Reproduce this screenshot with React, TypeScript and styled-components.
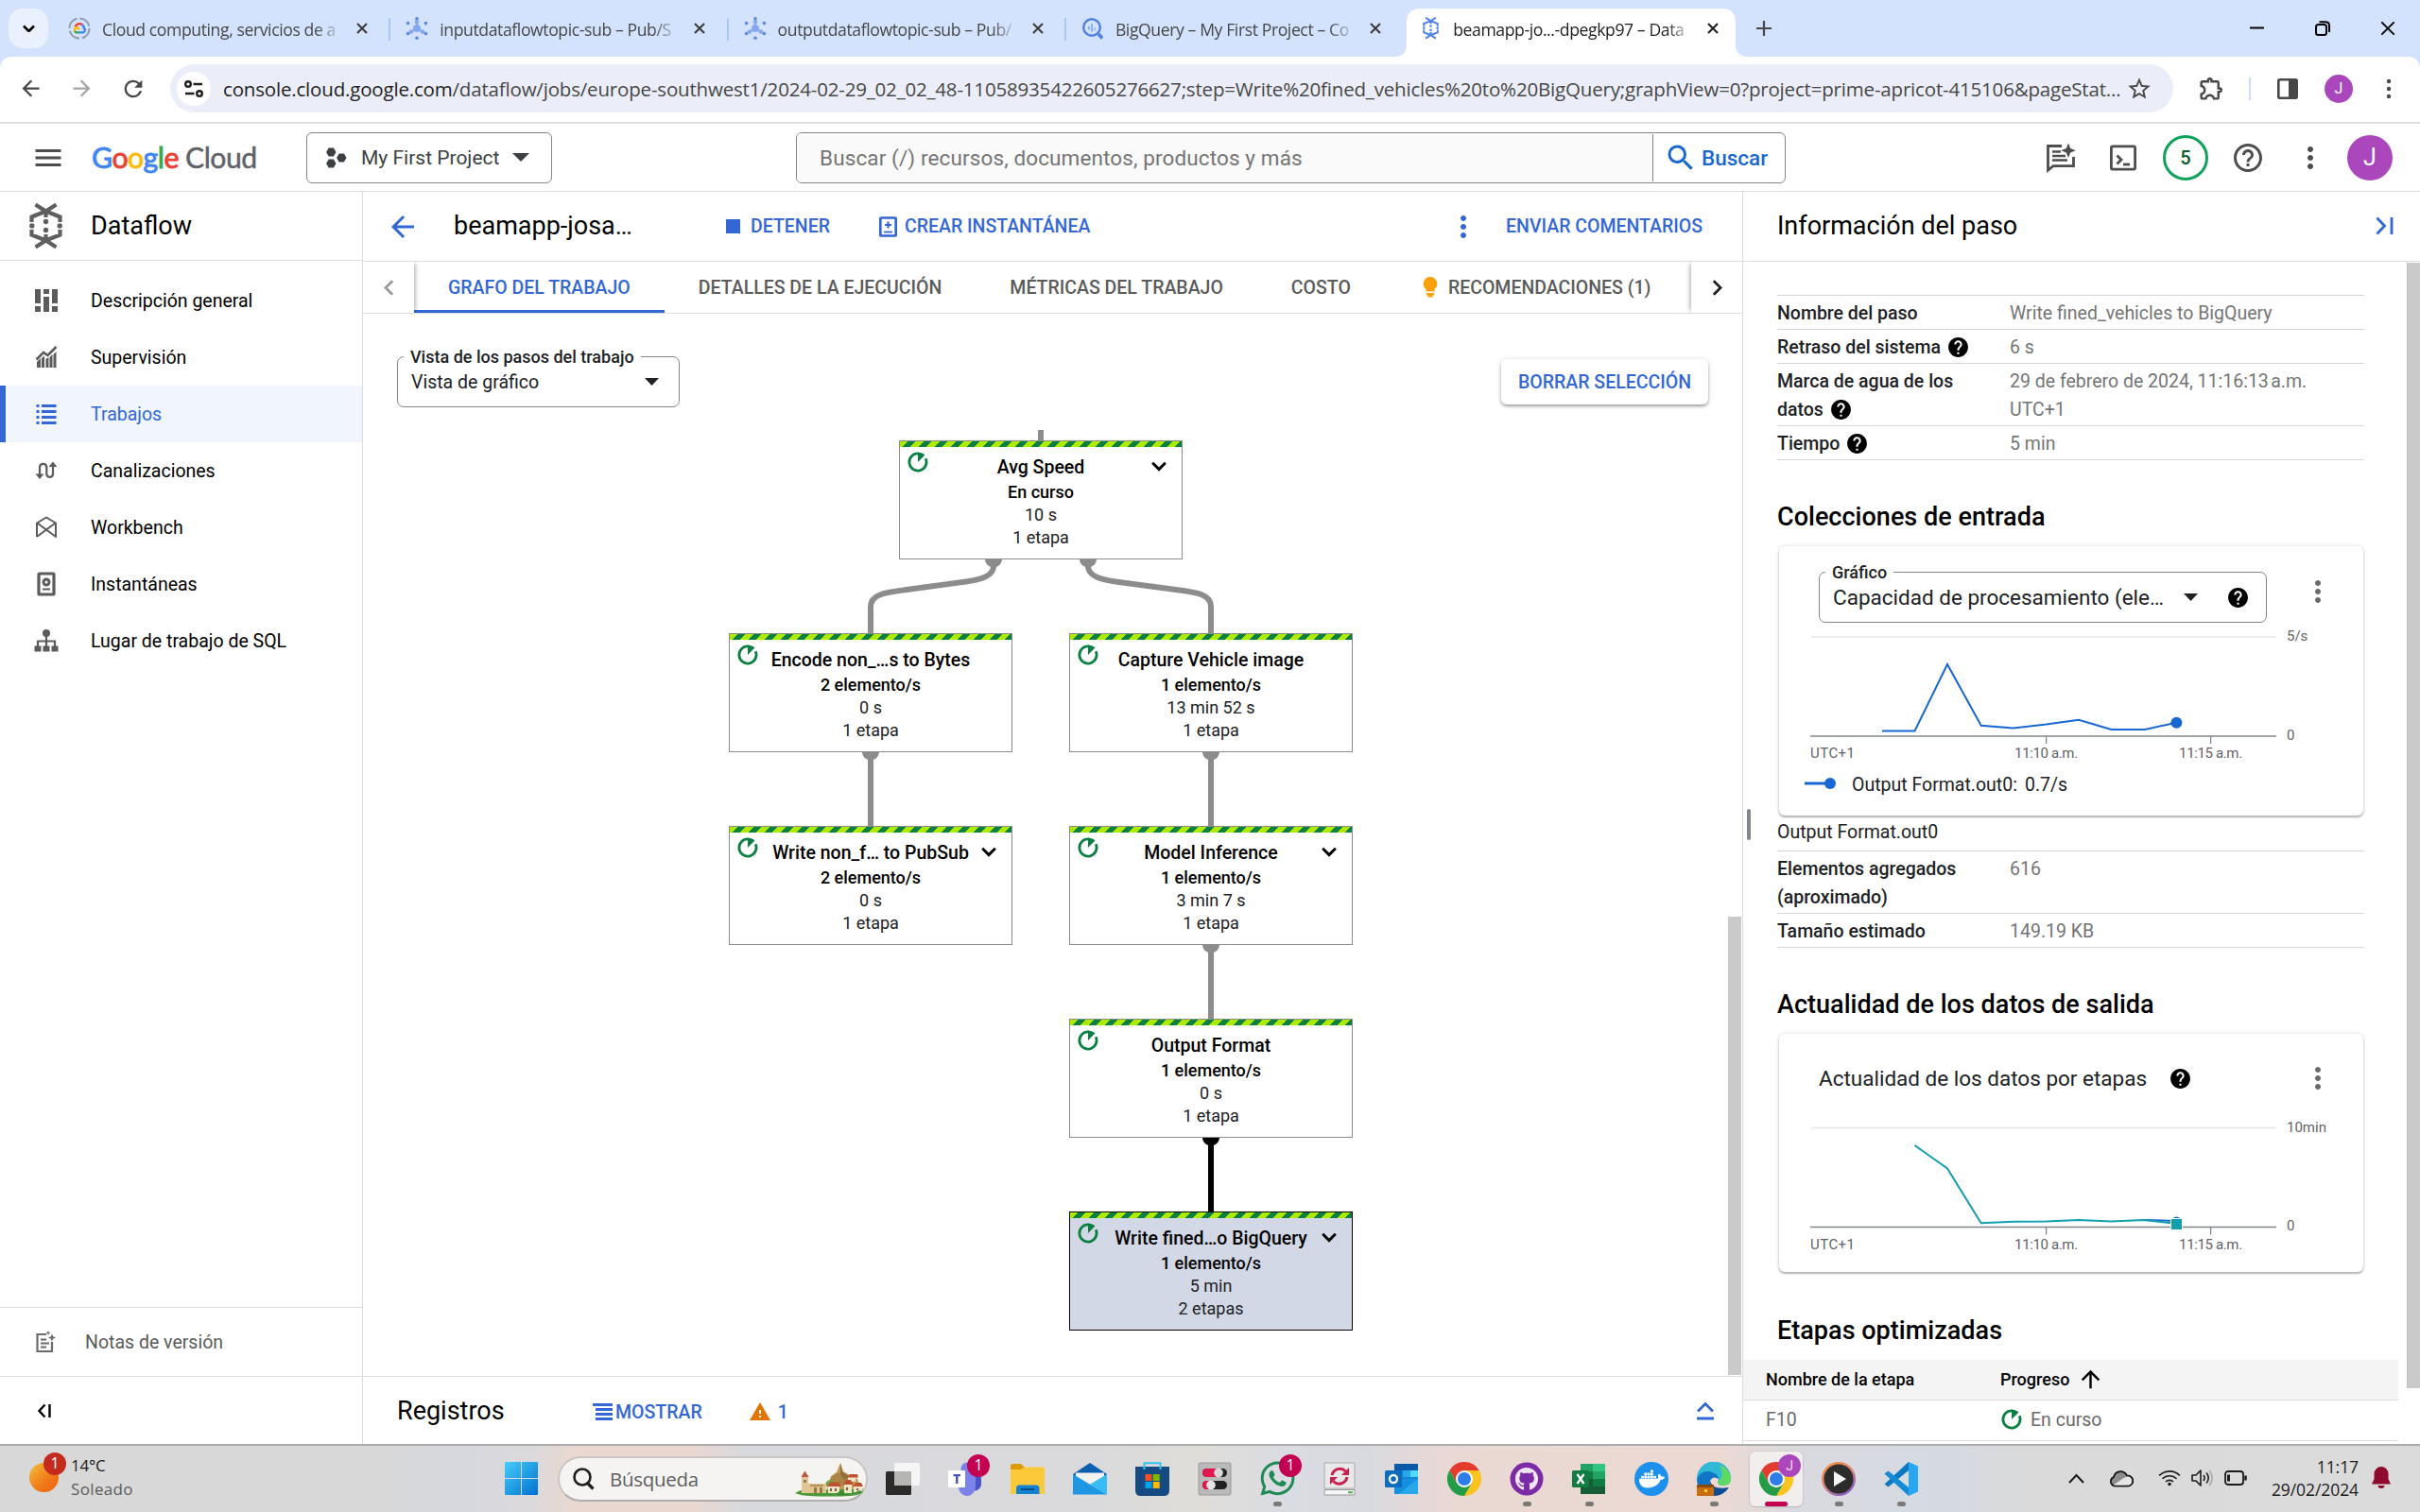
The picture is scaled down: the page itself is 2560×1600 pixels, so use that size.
import React from "react";
import styled, { createGlobalStyle, css } from "styled-components";
import {
  MdArrowBack,
  MdArrowForward,
  MdArrowUpward,
  MdChevronLeft,
  MdChevronRight,
  MdHelp,
  MdHelpOutline,
  MdMenu,
  MdMoreVert,
  MdOutlineExtension,
  MdRefresh,
  MdSearch,
  MdStarOutline,
  MdWarning,
} from "react-icons/md";
import { FaDocker, FaGithub, FaWhatsapp } from "react-icons/fa";

const ui = `Roboto, "Liberation Sans", sans-serif`;
const sys = `"Open Sans", "Noto Sans", sans-serif`;
const blue = "#3367d6";
const rule = "#dcdcdc";

const Global = createGlobalStyle`
  *, *::before, *::after { box-sizing: border-box; }
  body { margin: 0; background: #fff; font-family: ${ui}; color: #000; }
  svg { display: block; flex: none; }
`;

const Screen = styled.div`
  width: 2560px;
  height: 1600px;
  display: flex;
  flex-direction: column;
  overflow: hidden;
  background: #fff;
`;

/* ---------- browser chrome ---------- */

const TabStrip = styled.div`
  height: 60px;
  flex: none;
  display: flex;
  align-items: center;
  background: #d3e2fd;
  font-family: ${sys};
`;

const TabSearch = styled.div`
  width: 42px;
  height: 42px;
  margin: 0 4px 0 9px;
  border-radius: 15px;
  background: #e9f1fe;
  display: grid;
  place-items: center;
`;

const BrowserTab = styled.div<{ $active?: boolean; $line?: boolean }>`
  width: 357.3px;
  height: 60px;
  padding: 0 20px 0 17px;
  display: flex;
  align-items: center;
  position: relative;
  flex: none;
  ${(p) =>
    p.$line &&
    css`
      &::after {
        content: "";
        position: absolute;
        right: -1px;
        top: 19px;
        width: 2px;
        height: 24px;
        background: #a8c7fa;
      }
    `}
`;

const ActiveTabShape = styled.svg`
  position: absolute;
  left: -8px;
  top: 9px;
`;

const TabLabel = styled.span<{ $active?: boolean }>`
  position: relative;
  width: 258px;
  margin-left: 12px;
  white-space: nowrap;
  font-size: 17.6px;
  line-height: 26px;
  letter-spacing: -0.4px;
  padding-top: 2px;
  color: ${(p) => (p.$active ? "#1f1f1f" : "#474747")};
  mask-image: linear-gradient(90deg, #000 226px, transparent 254px);
`;

const TabIcon = styled.span`
  position: relative;
  width: 24px;
  display: flex;
`;

const TabClose = styled.span`
  position: relative;
  width: 13px;
  margin-left: 11px;
  display: flex;
`;

const NewTab = styled.div`
  width: 50px;
  display: grid;
  place-items: center;
`;

const WindowButtons = styled.div`
  margin-left: auto;
  display: flex;
  > span {
    width: 69px;
    display: grid;
    place-items: center;
  }
`;

const ToolbarBack = styled.div`
  background: #d3e2fd;
  flex: none;
`;

const Toolbar = styled.div`
  height: 71px;
  display: flex;
  align-items: center;
  padding: 0 0 2px 19px;
  border-radius: 12px 12px 0 0;
  background: #fff;
  border-bottom: 2px solid #dfdfdf;
  color: #474747;
`;

const ToolButton = styled.span<{ $w: number; $dim?: boolean }>`
  width: ${(p) => p.$w}px;
  flex: none;
  display: flex;
  color: ${(p) => (p.$dim ? "#a5a5a5" : "#474747")};
`;

const Omnibox = styled.div`
  width: 2119px;
  flex: none;
  height: 51px;
  border-radius: 26px;
  background: #ebeef8;
  display: flex;
  align-items: center;
  padding: 0 22px 0 7px;
  font-family: ${sys};
`;

const SiteInfo = styled.span`
  width: 36px;
  height: 36px;
  border-radius: 50%;
  background: #fff;
  display: grid;
  place-items: center;
  margin-right: 13px;
`;

const Url = styled.span`
  flex: 1;
  white-space: nowrap;
  font-size: 20.5px;
  letter-spacing: -0.18px;
  color: #474747;
  b {
    font-weight: 400;
    color: #1f1f1f;
  }
`;

const Disc = styled.span<{ $size: number; $font: number }>`
  width: ${(p) => p.$size}px;
  height: ${(p) => p.$size}px;
  font-size: ${(p) => p.$font}px;
  border-radius: 50%;
  background: #ab47bc;
  color: #fff;
  display: grid;
  place-items: center;
  flex: none;
  font-family: ${ui};
`;

const ToolDivider = styled.span`
  width: 2px;
  flex: none;
  height: 24px;
  background: #c8dcfc;
`;

/* ---------- console header ---------- */

const Header = styled.header`
  height: 72px;
  flex: none;
  display: flex;
  align-items: center;
  border-bottom: 1px solid ${rule};
  padding-left: 33px;
  color: #4d4d4d;
`;

const Logo = styled.div`
  width: 227px;
  margin-left: 28px;
  padding-bottom: 2px;
  font: 400 30.2px/40px Lato, sans-serif;
  letter-spacing: -0.5px;
  -webkit-text-stroke: 0.5px currentColor;
  white-space: nowrap;
  color: #5f6368;
`;

const Ink = styled.span<{ $c: string }>`
  color: ${(p) => p.$c};
  -webkit-text-stroke: 0.9px ${(p) => p.$c};
`;

const ProjectPicker = styled.div`
  width: 260px;
  height: 54px;
  border: 1.5px solid #80868b;
  border-radius: 6px;
  display: flex;
  align-items: center;
  padding-left: 20px;
  font-size: 21px;
  color: #3c4043;
  > span {
    width: 160px;
    margin-left: 15px;
  }
`;

const SearchBox = styled.div`
  width: 1047px;
  height: 54px;
  margin-left: 258px;
  border: 1.5px solid #80868b;
  border-radius: 6px;
  display: flex;
  align-items: center;
  overflow: hidden;
  font-size: 22.5px;
`;

const SearchInput = styled.span`
  flex: 1;
  height: 100%;
  padding-left: 24px;
  display: flex;
  align-items: center;
  background: #fafafa;
  color: #757575;
  letter-spacing: 0.12px;
`;

const SearchButton = styled.span`
  width: 140px;
  height: 50px;
  border-left: 1px solid #80868b;
  display: flex;
  align-items: center;
  padding-left: 11px;
  gap: 4px;
  color: #1967d2;
  font-weight: 500;
`;

const HeaderTools = styled.div`
  margin-left: 258px;
  display: flex;
  align-items: center;
  > * {
    width: 66px;
    display: grid;
    place-items: center;
  }
  > :last-child {
    width: 60px;
  }
`;

const Badge5 = styled.span`
  width: 48px;
  height: 48px;
  border: 3px solid #12a15b;
  border-radius: 50%;
  display: grid;
  place-items: center;
  font-size: 20px;
  font-weight: 500;
  color: #0a5a32;
`;

/* ---------- body ---------- */

const Body = styled.div`
  flex: 1;
  min-height: 0;
  display: flex;
`;

const Sidebar = styled.nav`
  width: 384px;
  flex: none;
  border-right: 1px solid ${rule};
  display: flex;
  flex-direction: column;
`;

const Product = styled.div`
  height: 73px;
  border-bottom: 1px solid ${rule};
  display: flex;
  align-items: center;
  padding-left: 31px;
  gap: 30px;
  font-size: 27px;
`;

const NavList = styled.div`
  padding-top: 12px;
  flex: 1;
`;

const NavItem = styled.div<{ $active?: boolean }>`
  height: 60px;
  display: flex;
  align-items: center;
  gap: 34px;
  padding-left: ${(p) => (p.$active ? 30 : 36)}px;
  border-left: ${(p) => (p.$active ? `6px solid ${blue}` : "0")};
  background: ${(p) => (p.$active ? "#f0f5fe" : "none")};
  color: ${(p) => (p.$active ? blue : "#000")};
  font-size: 19.5px;
  svg {
    color: ${(p) => (p.$active ? blue : "#5b5b5b")};
  }
`;

const NotesItem = styled.div`
  height: 73px;
  border-top: 1px solid ${rule};
  display: flex;
  align-items: center;
  gap: 30px;
  padding-left: 36px;
  font-size: 19.5px;
  color: #5b5b5b;
`;

const Collapse = styled.div`
  height: 72px;
  border-top: 1px solid ${rule};
  display: flex;
  align-items: center;
  padding-left: 38px;
`;

const Main = styled.main`
  width: 1460px;
  flex: none;
  border-right: 1px solid ${rule};
  display: flex;
  flex-direction: column;
`;

const MainHeader = styled.div`
  height: 74px;
  border-bottom: 1px solid ${rule};
  display: flex;
  align-items: center;
  padding-left: 24px;
  color: ${blue};
`;

const JobTitle = styled.span`
  width: 287px;
  margin-left: 36px;
  padding-bottom: 2px;
  font-size: 27px;
  color: #000;
`;

const TextButton = styled.span<{ $gap?: number }>`
  display: flex;
  align-items: center;
  gap: ${(p) => p.$gap ?? 9}px;
  font-size: 19.5px;
  font-weight: 500;
  white-space: nowrap;
  color: ${blue};
`;

const StopSquare = styled.i`
  width: 15px;
  height: 15px;
  background: ${blue};
`;

const TabBar = styled.div`
  height: 55px;
  border-bottom: 1px solid ${rule};
  display: flex;
`;

const TabArrow = styled.span<{ $right?: boolean }>`
  width: 54px;
  display: grid;
  place-items: center;
  background: #fff;
  color: ${(p) => (p.$right ? "#202124" : "#9a9a9a")};
  box-shadow: ${(p) => (p.$right ? "-3px 0 5px -2px" : "3px 0 5px -2px")} rgba(0, 0, 0, 0.35);
  clip-path: ${(p) => (p.$right ? "inset(0 0 0 -8px)" : "inset(0 -8px 0 0)")};
`;

const PageTab = styled.span<{ $active?: boolean; $icon?: boolean }>`
  height: 54px;
  padding: 0 36px 0 ${(p) => (p.$icon ? 40 : 36)}px;
  display: flex;
  align-items: center;
  gap: 11px;
  font-size: 19.5px;
  font-weight: 500;
  white-space: nowrap;
  color: ${(p) => (p.$active ? blue : "#5b5b5b")};
  box-shadow: ${(p) => (p.$active ? `inset 0 -3px ${blue}` : "none")};
`;

const Canvas = styled.div`
  flex: 1;
  min-height: 0;
  position: relative;
  padding: 45px 36px 0;
`;

const FilterRow = styled.div`
  display: flex;
  justify-content: space-between;
`;

const Outlined = styled.div<{ $w: number; $font: number }>`
  position: relative;
  width: ${(p) => p.$w}px;
  height: 54px;
  border: 1.5px solid #80868b;
  border-radius: 7px;
  display: flex;
  align-items: center;
  padding-left: 14px;
  font-size: ${(p) => p.$font}px;
  color: #202124;
`;

const FloatLabel = styled.label`
  position: absolute;
  left: 6px;
  top: -11px;
  padding: 0 7px;
  background: #fff;
  font-size: 18px;
  line-height: 22px;
  font-weight: 500;
  color: #202124;
  white-space: nowrap;
`;

const OutlinedText = styled.span<{ $w: number }>`
  width: ${(p) => p.$w}px;
  flex: none;
  white-space: nowrap;
`;

const RaisedButton = styled.div`
  width: 219px;
  height: 48px;
  margin-top: 3px;
  border-radius: 6px;
  display: grid;
  place-items: center;
  font-size: 19.5px;
  font-weight: 500;
  color: ${blue};
  box-shadow: 0 2px 3px rgba(0, 0, 0, 0.3), 0 1px 6px rgba(0, 0, 0, 0.14);
`;

const EdgeLayer = styled.svg`
  position: absolute;
  left: 0;
  top: 0;
`;

const Node = styled.div<{ $x: number; $y: number; $selected?: boolean }>`
  position: absolute;
  left: ${(p) => p.$x}px;
  top: ${(p) => p.$y}px;
  width: 300px;
  height: 126px;
  border: 1px solid ${(p) => (p.$selected ? "#000" : "#8c8c8c")};
  background: ${(p) => (p.$selected ? "#d2d8e6" : "#fff")};
  display: flex;
  flex-direction: column;
  align-items: center;
  text-align: center;
  font-size: 18px;
  line-height: 24px;
  color: #202124;
  &::before {
    content: "";
    width: 100%;
    height: 6px;
    margin-bottom: 8px;
    background: repeating-linear-gradient(135deg, #aeea00 0 6px, #0b8043 6px 12px);
  }
`;

const NodeTitle = styled.span`
  margin-bottom: -1px;
  font-size: 19.5px;
  line-height: 28px;
  font-weight: 500;
  white-space: nowrap;
  color: #000;
`;

const NodeMetric = styled.span`
  font-weight: 500;
  line-height: 25px;
  color: #000;
`;

const NodeStatus = styled.span`
  position: absolute;
  left: 7px;
  top: 10px;
`;

const NodeChevron = styled.span`
  position: absolute;
  right: 16px;
  top: 21px;
`;

const GraphScrollbar = styled.i`
  position: absolute;
  right: 1px;
  top: 638px;
  width: 14px;
  height: 485px;
  background: #cacaca;
`;

const LogsBar = styled.div`
  height: 72px;
  border-top: 1px solid ${rule};
  display: flex;
  align-items: center;
  padding: 0 30px 0 36px;
  ${TextButton} {
    padding-top: 3px;
  }
`;

const LogsTitle = styled.span`
  width: 207px;
  font-size: 27px;
`;

const Spacer = styled.span`
  flex: 1;
`;

/* ---------- step info panel ---------- */

const Panel = styled.aside`
  flex: 1;
  display: flex;
  flex-direction: column;
  min-width: 0;
  position: relative;
`;

const ResizeHandle = styled.i`
  position: absolute;
  left: 4px;
  top: 653px;
  width: 4px;
  height: 33px;
  border-radius: 2px;
  background: #80868b;
`;

const PanelHeader = styled.div`
  height: 74px;
  flex: none;
  border-bottom: 1px solid ${rule};
  display: flex;
  align-items: center;
  justify-content: space-between;
  padding: 0 28px 1px 36px;
  font-size: 27px;
`;

const PanelBody = styled.div`
  flex: 1;
  min-height: 0;
  display: flex;
  justify-content: space-between;
  overflow: hidden;
`;

const PanelScrollbar = styled.i`
  width: 14px;
  height: 1191px;
  margin-top: 1px;
  background: #cacaca;
  border-left: 1px solid #bdbdbd;
`;

const PanelContent = styled.div`
  padding: 35px 0 0 36px;
  width: 657px;
`;

const InfoTable = styled.dl`
  margin: 0;
  border-top: 1px solid #d6d6d6;
`;

const InfoRow = styled.div`
  display: grid;
  grid-template-columns: 246px 1fr;
  padding: 4px 0 1px;
  border-bottom: 1px solid #d6d6d6;
  font-size: 19.5px;
  line-height: 30px;
  dt {
    font-weight: 500;
    color: #202124;
    white-space: pre-line;
  }
  dt svg {
    display: inline-block;
    vertical-align: -6px;
    margin: -3px 0 0 6px;
    color: #000;
  }
  dd {
    margin: 0;
    color: #757575;
    white-space: pre-line;
  }
`;

const Heading = styled.h2<{ $top?: number }>`
  margin: ${(p) => p.$top ?? 42}px 0 13px;
  font-size: 27px;
  line-height: 36px;
  font-weight: 500;
  letter-spacing: 0.02px;
`;

const Card = styled.section<{ $h: number }>`
  height: ${(p) => p.$h}px;
  margin: 0 1px 0 2px;
  border-radius: 6px;
  display: flex;
  flex-direction: column;
  box-shadow: 0 2px 2px rgba(0, 0, 0, 0.26), 0 0 4px rgba(0, 0, 0, 0.16);
`;

const CardTop = styled.div<{ $pad: number; $h: number }>`
  height: ${(p) => p.$h}px;
  flex: none;
  padding: ${(p) => p.$pad}px 30px 0 42px;
  display: flex;
  align-items: center;
  justify-content: space-between;
  color: #6b6b6b;
`;

const CardMenu = styled.span<{ $raise?: boolean }>`
  padding-bottom: ${(p) => (p.$raise ? 12 : 0)}px;
`;

const CardTitle = styled.span`
  display: flex;
  align-items: center;
  gap: 23px;
  font-size: 22.5px;
  color: #202124;
  svg {
    color: #000;
  }
`;

const Legend = styled.div`
  height: 36px;
  display: flex;
  align-items: center;
  padding-left: 26px;
  font-size: 19.5px;
  color: #202124;
  gap: 8px;
  svg {
    margin-right: 8px;
  }
`;

const Caption = styled.div`
  height: 37px;
  line-height: 35px;
  font-size: 19.5px;
  color: #202124;
`;

const StageGrid = styled.div<{ $head?: boolean }>`
  width: 693px;
  height: 43px;
  margin-left: -36px;
  padding: 0 0 2px 24px;
  display: grid;
  grid-template-columns: 248px 1fr;
  align-items: center;
  border-bottom: 1px solid ${rule};
  background: ${(p) => (p.$head ? "#f4f4f4" : "#fff")};
  font-size: ${(p) => (p.$head ? 18 : 19.5)}px;
  font-weight: ${(p) => (p.$head ? 500 : 400)};
  color: ${(p) => (p.$head ? "#000" : "#6b6b6b")};
  span {
    display: flex;
    align-items: center;
    gap: 8px;
  }
`;

/* ---------- taskbar ---------- */

const Taskbar = styled.footer`
  height: 72px;
  flex: none;
  border-top: 2px solid #ababab;
  padding-bottom: 1px;
  display: flex;
  align-items: center;
  font-family: ${sys};
  background: linear-gradient(
    90deg,
    #d8d8d8 0,
    #d8d8d8 400px,
    #d6d8df 480px,
    #dbd9dc 560px,
    #ead8d0 610px,
    #ead8d0 730px,
    #d8d9de 790px,
    #dadadc 1160px,
    #e0ddd8 1270px,
    #dadce3 1360px,
    #d9dae0 1450px,
    #ead8d4 1530px,
    #ecd9d3 1820px,
    #d9dadf 1900px,
    #d5dae2 2060px,
    #dadada 2150px,
    #dbdbdb 2560px
  );
`;

const Weather = styled.div`
  width: 534px;
  display: flex;
  align-items: center;
  padding: 0 0 2px 31px;
  font-size: 17px;
  line-height: 24.5px;
  letter-spacing: -0.2px;
  color: #1b1b1b;
  em {
    font-style: normal;
    letter-spacing: 0.35px;
    color: #5c5c5c;
  }
`;

const SunIcon = styled.span`
  position: relative;
  width: 31px;
  height: 31px;
  margin-right: 13px;
  border-radius: 50%;
  background: linear-gradient(135deg, #f2c038, #f07818 60%, #f0600f);
`;

const Count = styled.b<{ $x: number; $y: number; $c?: string }>`
  position: absolute;
  left: ${(p) => p.$x}px;
  top: ${(p) => p.$y}px;
  width: 24px;
  height: 24px;
  border-radius: 50%;
  background: ${(p) => p.$c ?? "#c30052"};
  color: #fff;
  font-size: 16px;
  line-height: 23px;
  font-weight: 400;
  text-align: center;
`;

const SearchPill = styled.div`
  width: 328px;
  height: 48px;
  margin: 0 4px 0 21px;
  border-radius: 24px;
  border: 2px solid #cbc5c4;
  border-bottom-color: #b1adad;
  background: #f6f4f3;
  display: flex;
  align-items: center;
  padding: 0 1px 0 13px;
  font-size: 20.5px;
  color: #5e5e5e;
  > span {
    flex: 1;
    margin-left: 16px;
    letter-spacing: -0.3px;
  }
`;

const Apps = styled.div`
  display: flex;
  width: 1122px;
`;

const AppCell = styled.div<{ $active?: boolean; $run?: boolean }>`
  position: relative;
  width: 56px;
  height: 58px;
  margin: 0 5px;
  border-radius: 6px;
  display: grid;
  place-items: center;
  background: ${(p) => (p.$active ? "#f3eeee" : "none")};
  box-shadow: ${(p) => (p.$active ? "0 0 0 1px rgba(0,0,0,.05), 0 1px 2px rgba(0,0,0,.12)" : "none")};
  &::after {
    content: "";
    display: ${(p) => (p.$active || p.$run ? "block" : "none")};
    position: absolute;
    bottom: 0;
    left: 50%;
    width: ${(p) => (p.$active ? 24 : 9)}px;
    height: 5px;
    margin-left: ${(p) => (p.$active ? -12 : -4)}px;
    border-radius: 3px;
    background: ${(p) => (p.$active ? "#c30052" : "#7b7878")};
  }
`;

const Profile = styled.i`
  position: absolute;
  left: 30px;
  top: 3px;
  width: 24px;
  height: 24px;
  border-radius: 50%;
  background: #ab47bc;
  color: #f0dcf4;
  font: 400 14px/24px ${ui};
  text-align: center;
`;

const Tray = styled.div`
  margin-left: 144px;
  padding-bottom: 1px;
  display: flex;
  align-items: center;
  color: #1b1b1b;
`;

const Slot = styled.span<{ $w: number }>`
  width: ${(p) => p.$w}px;
  flex: none;
  display: grid;
  place-items: center;
`;

const Clock = styled.div`
  width: 109px;
  font-size: 17.5px;
  line-height: 24px;
  letter-spacing: -0.08px;
  text-align: right;
  white-space: nowrap;
`;

/* ---------- icons ---------- */

const DataflowGlyph = ({ w, color }: { w: number; color: string }) => (
  <svg width={w} height={(w * 48) / 35} viewBox="0 0 35 48" fill="none" stroke={color} strokeWidth="4.2">
    <path d="M6.500 1.500 L17.500 8.500 L32.500 14.500 V20 M28.500 1.500 L17.500 8.500 L2.500 14.500 V20 M17.500 8 V15" />
    <path d="M6.500 46.500 L17.500 39.500 L32.500 33.500 V28 M28.500 46.500 L17.500 39.500 L2.500 33.500 V28 M17.500 40 V33" />
    <g fill={color} stroke="none">
      <circle cx="2.8" cy="24" r="2.700" />
      <circle cx="32.200" cy="24" r="2.700" />
      <circle cx="17.500" cy="19.500" r="2.700" />
      <circle cx="17.500" cy="28.500" r="2.700" />
    </g>
  </svg>
);

const PubSubGlyph = () => (
  <svg width="24" height="24" viewBox="0 0 24 24" fill="#5c85de">
    <g stroke="#7ba0ec" strokeWidth="1.800">
      <path d="M12 12 V5 M12 12 L5 16 M12 12 L19 16" />
    </g>
    <circle cx="12" cy="12" r="4" fill="#86a8f2" />
    <circle cx="6" cy="15.600" r="2.300" fill="#86a8f2" />
    <circle cx="18" cy="15.600" r="2.300" fill="#86a8f2" />
    <circle cx="12" cy="5.200" r="2.300" fill="#86a8f2" />
    <circle cx="12" cy="1.800" r="1.800" />
    <circle cx="12" cy="22.200" r="1.800" />
    <circle cx="2.600" cy="6.600" r="1.800" />
    <circle cx="21.400" cy="6.600" r="1.800" />
    <circle cx="2.600" cy="17.600" r="1.800" />
    <circle cx="21.400" cy="17.600" r="1.800" />
  </svg>
);

const CloudGlyph = () => (
  <svg width="24" height="24" viewBox="0 0 24 24" fill="none">
    <circle cx="12" cy="12" r="10.600" stroke="#8e99a8" strokeWidth="2" strokeDasharray="13.600 3.050" />
    <path d="M7.500 10.500 A5 5 0 0 1 15 8" stroke="#ea4335" strokeWidth="2.400" />
    <path d="M15 8 A6 6 0 0 1 17 13" stroke="#4285f4" strokeWidth="2.400" />
    <path d="M17.200 12 A2.600 2.600 0 0 1 15 16.400 H12" stroke="#4285f4" strokeWidth="2.400" />
    <path d="M12 16.400 H9 A2.800 2.800 0 0 1 7 14.800" stroke="#34a853" strokeWidth="2.400" />
    <path d="M7 15 A3 3 0 0 1 9.500 11 L12 13" stroke="#fbbc04" strokeWidth="2.400" />
  </svg>
);

const BigQueryGlyph = () => (
  <svg width="24" height="24" viewBox="0 0 24 24" fill="none" stroke="#5081e4">
    <circle cx="11" cy="11" r="8.800" strokeWidth="2.400" />
    <path d="M18 18 L22 22.500" strokeWidth="3.400" />
    <path d="M7.800 10 V13.500 M11 7 V15.500 M14.200 11.500 V13.500" strokeWidth="1.800" stroke="#86a8f2" />
  </svg>
);

const Cross = ({ size = 11, w = 2.1, color = "#3c3c3c" }) => (
  <svg width={size} height={size} viewBox="0 0 12 12" stroke={color} strokeWidth={w}>
    <path d="M1 1 L11 11 M11 1 L1 11" />
  </svg>
);

const Caret = ({ w = 15, h = 8 }: { w?: number; h?: number }) => (
  <svg width={w} height={h} viewBox="0 0 16 8" preserveAspectRatio="none" fill="currentColor">
    <path d="M0 0 H16 L8 8 Z" />
  </svg>
);

const StatusGlyph = () => (
  <svg width="24" height="24" viewBox="0 0 24 24" fill="none">
    <path d="M12.600 2.900 A9.100 9.100 0 1 0 20.300 8.300" stroke="#0b8043" strokeWidth="2.800" />
    <path d="M12 1.500 A10.500 10.500 0 0 1 17.600 3.100 L19.400 4.400 L12 12 Z" fill="#0b8043" />
  </svg>
);

const ChevronDown = ({ w = 16, sw = 2.9 }) => (
  <svg width={w} height={(w * 11) / 16} viewBox="0 0 16 11" fill="none" stroke="#000" strokeWidth={sw}>
    <path d="M1.200 1.800 L8 8.600 L14.800 1.800" />
  </svg>
);

const NavIcon: React.FC<{ name: string }> = ({ name }) => (
  <svg width="26" height="26" viewBox="0 0 26 26" fill="currentColor">
    {name === "overview" && (
      <path d="M1 1h6v15H1zM1 19h6v6H1zM10 1h6v5h-6zM10 9h6v16h-6zM19 1h6v15h-6zM19 19h6v6h-6z" />
    )}
    {name === "monitor" && (
      <>
        <path d="M3 18l4-4v10H3zM8 14l3-2.500V24H8zM12.500 14.500l3-1V24h-3zM16.500 13l3-3V24h-3zM20.500 10l3-3V24h-3z" />
        <path d="M2.500 15.500 L10 8 L14.500 11 L23.500 2" fill="none" stroke="currentColor" strokeWidth="2.600" />
      </>
    )}
    {name === "jobs" && (
      <path d="M2.500 3h3v3h-3zM8 3h15.500v3H8zM2.500 9h3v3h-3zM8 9h15.500v3H8zM2.500 15h3v3h-3zM8 15h15.500v3H8zM2.500 21h3v3h-3zM8 21h15.500v3H8z" />
    )}
    {name === "pipes" && (
      <>
        <path
          d="M6 19 V9 A3.700 3.700 0 0 1 13.300 9 V17 A3.400 3.400 0 0 0 20 17 V7"
          fill="none"
          stroke="currentColor"
          strokeWidth="2.200"
        />
        <path d="M1.500 16.500h9L6 22zM15.500 9h9L20 3.500z" />
      </>
    )}
    {name === "workbench" && (
      <path
        d="M3 23 V8.500 L13 2.500 L23 8.500 V23 L3.500 8.500 M3 23 L22.500 8.500"
        fill="none"
        stroke="currentColor"
        strokeWidth="2"
        strokeLinejoin="round"
      />
    )}
    {name === "snapshots" && (
      <>
        <rect x="5" y="2" width="16" height="22" rx="1" fill="none" stroke="currentColor" strokeWidth="3.200" />
        <circle cx="13" cy="11" r="3" fill="none" stroke="currentColor" strokeWidth="3" />
        <path d="M9 17.500h8v2H9z" />
      </>
    )}
    {name === "sql" && (
      <>
        <circle cx="13" cy="5" r="4" />
        <path d="M4 19 V13.500 H22 V19 M13 8 V19" fill="none" stroke="currentColor" strokeWidth="2.200" />
        <path d="M0.500 18.500h7v6h-7zM9.500 18.500h7v6h-7zM18.500 18.500h7v6h-7z" />
      </>
    )}
  </svg>
);

const NotesGlyph = () => (
  <svg width="24" height="24" viewBox="0 0 24 24" fill="none" stroke="#6b6b6b" strokeWidth="2.200">
    <path d="M13 4 H3.500 V22 H19 V12" />
    <path d="M7 9.500h6M7 13.500h9M7 17.500h6" strokeWidth="1.900" />
    <path
      d="M19 3.500l1.200 2.800 2.800 1.200-2.800 1.200L19 11.500l-1.200-2.800L15 7.500l2.800-1.200zM15 0l.7 1.800 1.800.7-1.800.7L15 5l-.7-1.800-1.800-.7 1.800-.7z"
      fill="#6b6b6b"
      stroke="none"
    />
  </svg>
);

const CommentSparkle = () => (
  <svg width="32" height="32" viewBox="0 0 32 32" fill="none" stroke="#4d4d4d" strokeWidth="2.800">
    <path d="M17 3.500 H2.500 V29 L8 24.600 H29.500 V15" />
    <path d="M7 9.500h9M7 14h14M7 18.500h16" strokeWidth="2.400" />
    <path
      d="M24 0.500l2.200 5.600 5.600 2.200-5.600 2.200L24 16.100l-2.200-5.600-5.600-2.200 5.600-2.200z"
      fill="#4d4d4d"
      stroke="none"
    />
  </svg>
);

const ShellGlyph = () => (
  <svg width="28" height="28" viewBox="0 0 28 28" fill="none" stroke="#4d4d4d" strokeWidth="2.800">
    <rect x="1.400" y="1.900" width="25.200" height="24.200" rx="1.500" />
    <path d="M7.500 11.500 L12 16 L7.500 20.500" />
    <path d="M14 21 H21" />
  </svg>
);

/* ---------- chart ---------- */

type Pt = [number, number];
const line = (pts: Pt[]) => pts.map((p) => p.join(",")).join(" ");

const Chart: React.FC<{
  h: number;
  top: number;
  max: string;
  children: React.ReactNode;
}> = ({ h, top, max, children }) => {
  const base = top + 105;
  return (
    <svg width="618" height={h} fontFamily={ui} fontSize="15" fill="#5f6368">
      <path d={`M34 ${top} H526`} stroke="#e6e6e6" strokeWidth="1.500" />
      <path d={`M33 ${base} H526 M282.600 ${base} v8 M456.600 ${base} v8`} stroke="#80868b" strokeWidth="1.300" fill="none" />
      <text x="537" y={top + 4}>{max}</text>
      <text x="537" y={base + 3.5}>0</text>
      <text x="33" y={base + 23} textLength="47">UTC+1</text>
      <text x="282.600" y={base + 23} textAnchor="middle" textLength="67">11:10 a.m.</text>
      <text x="456.600" y={base + 23} textAnchor="middle" textLength="67">11:15 a.m.</text>
      {children}
    </svg>
  );
};

/* x positions share one minute step of 34.6px */
const throughput: Pt[] = [
  [109, 114.5], [143.5, 114.5], [178, 44], [213.7, 108.7], [248, 111.5],
  [282.6, 107.5], [317, 102.7], [351.5, 113], [387, 113], [420.4, 105.7],
];
const freshness: Pt[] = [
  [143.5, 45], [178, 69.5], [213.7, 127.3], [248, 125.7], [282.6, 125.5],
  [317, 124], [351.5, 125.5], [386, 124], [420.4, 128],
];

/* ---------- taskbar art ---------- */

const Castle = () => (
  <svg width="76" height="38" viewBox="0 0 76 38">
    <path d="M2 34 Q8 30 14 31 L70 29 Q75 26 73 34 Q66 38 40 37.500 Q10 38 2 34Z" fill="#4e9a3a" />
    <path d="M36 30 L40 16 L46 12 L50 2 L53 11 L60 15 L68 19 L72 30Z" fill="#c49a55" />
    <path d="M40 18 Q48 8 58 16 L66 22 L56 26 L38 25Z" fill="#a98446" />
    <path d="M50 2 L52.500 12 L60 16 L54 20 L50 14Z" fill="#8f7038" />
    <path d="M33 27 Q36 16 44 22 L50 28Z" fill="#7ba344" />
    <path d="M9 17h7v17H9z" fill="#e2c697" />
    <path d="M8.500 17 L12.500 10.500 L16.500 17Z" fill="#c0563a" />
    <path d="M16 24h19v10H16z" fill="#dfc592" />
    <path d="M18 25h14v2H18z" fill="#b48e57" />
    <path d="M22 28h3v6h-3zM28 28h3v6h-3z" fill="#9a7647" />
    <path d="M37 27h12v7H37zM54 25h8v9h-8zM64 27h9v6h-9zM58 17h8v5h-8z" fill="#f0e4c9" />
    <path d="M36 27 L39 22.500 H48 L51 27ZM53 25 L56 20 H61 L64 25ZM63 27 L66 23 H72 L74 27ZM57 17.500 L60 14 H68 L69 17.500Z" fill="#bd5132" />
    <path d="M39 29h2v3h-2zM44 29h2v3h-2zM56 28h2v3h-2zM67 29h2v2h-2zM11.500 20h2v3h-2z" fill="#7d5a3c" />
    <path d="M46 36 Q50 27 56 36ZM66 34 Q69 29 74 33Z" fill="#3f8a35" />
  </svg>
);

const ChromeLogo = () => (
  <svg width="36" height="36" viewBox="0 0 36 36">
    <path d="M18 9 H33.600 A18 18 0 0 1 18 36 L25.800 22.500Z" fill="#fcc31e" />
    <path d="M18 9 H33.600 A18 18 0 0 0 2.400 9 L10.200 22.500Z" fill="#e33b2e" />
    <path d="M2.400 9 L10.200 22.500 L18 27 L25.800 22.500 L18 36 A18 18 0 0 1 2.400 9Z" fill="#249b47" />
    <circle cx="18" cy="18" r="9" fill="#fff" />
    <circle cx="18" cy="18" r="7" fill="#2f7de9" />
  </svg>
);

const appIcons: Record<string, React.ReactNode> = {
  taskview: (
    <svg width="38" height="36" viewBox="0 0 38 36">
      <rect x="1" y="10" width="27" height="25" rx="1.500" fill="#2b2b2a" />
      <rect x="10" y="1" width="27" height="24" rx="1.500" fill="#fff" fillOpacity=".72" />
      <rect x="10" y="10" width="18" height="15" fill="#b6b6b5" />
    </svg>
  ),
  teams: (
    <svg width="38" height="36" viewBox="0 0 38 36">
      <path d="M24 9h12v14a7 7 0 0 1-11 6z" fill="#4b55c4" />
      <circle cx="21" cy="7" r="6.500" fill="#7b83eb" />
      <path d="M12 11h18v14a9 10 0 0 1-18 2z" fill="#7b83eb" />
      <rect x="1" y="9" width="18" height="18" rx="1" fill="#fff" />
      <path d="M6.500 13h7.500v2.200h-2.500V23h-2.500v-7.800H6.500z" fill="#4b53bc" />
    </svg>
  ),
  folder: (
    <svg width="36" height="34" viewBox="0 0 36 34">
      <path d="M0 3 Q0 1 2 1 H11 L15 5 H34 V12 H0Z" fill="#dd9c05" />
      <path d="M0 7 H11 L15 4.500 H34 Q36 4.500 36 6 V33 H0Z" fill="#fcc93a" />
      <path d="M6 33 V27 Q6 23.500 9.500 23.500 H27 Q30.500 23.500 30.500 27 V33Z" fill="#1380d0" />
      <path d="M11 28 H25" stroke="#0a4c8c" strokeWidth="2" />
    </svg>
  ),
  mail: (
    <svg width="36" height="34" viewBox="0 0 36 34">
      <path d="M0 12 L18 0 L36 12 V16 H0Z" fill="#0b5fae" />
      <path d="M3 10.500H33V20L18 25L3 20Z" fill="#f2f2f2" />
      <path d="M0 12 L36 33.500 H0Z" fill="#1f96e2" />
      <path d="M36 12 L18 22.800 L36 33.500Z" fill="#37bdf3" />
    </svg>
  ),
  store: (
    <svg width="36" height="36" viewBox="0 0 36 36">
      <path d="M0 5 H36 V30 Q36 36 30 36 H6 Q0 36 0 30Z" fill="#164a82" />
      <path d="M9.500 8 V1.200 H26.500 V8" fill="none" stroke="#33c1f4" strokeWidth="2" />
      <path d="M10.500 13h7v7h-7z" fill="#f25022" />
      <path d="M18.700 13h7v7h-7z" fill="#7fba00" />
      <path d="M10.500 21h7v7h-7z" fill="#00a4ef" />
      <path d="M18.700 21h7v7h-7z" fill="#ffb900" />
    </svg>
  ),
  toggles: (
    <svg width="36" height="36" viewBox="0 0 36 36">
      <rect x="1" y="1" width="34" height="34" rx="1.500" fill="#b9b9b9" stroke="#999" />
      <rect x="5" y="7" width="26" height="9" rx="4.500" fill="#222" />
      <path d="M9.500 7 H22 V16 H9.500 A4.500 4.500 0 0 1 9.500 7Z" fill="#e3154f" />
      <circle cx="22" cy="11.500" r="4.800" fill="#d9d9d9" />
      <rect x="5" y="20" width="26" height="9" rx="4.500" fill="#222" />
      <path d="M9.500 20 H13 V29 H9.500 A4.500 4.500 0 0 1 9.500 20Z" fill="#e3154f" />
      <circle cx="14" cy="24.500" r="4.800" fill="#e6e6e6" />
    </svg>
  ),
  whatsapp: <FaWhatsapp size={41} color="#1f8a56" />,
  sync: (
    <svg width="36" height="36" viewBox="0 0 36 36" fill="none">
      <path d="M2 1 H34 V28 H2Z" fill="#e9e9e9" stroke="#aaa" />
      <path d="M2 29.500 H34 V35 H2Z" fill="#f6f6f6" stroke="#999" />
      <path d="M27 32.300 h5" stroke="#4ab04a" strokeWidth="2" />
      <path d="M10 14 A8.500 8.500 0 0 1 24.500 10 M26 16 A8.500 8.500 0 0 1 11.500 20.500" stroke="#c8204f" strokeWidth="3" />
      <path d="M28 6v8h-8zM8 24v-8h8z" fill="#c8204f" />
    </svg>
  ),
  outlook: (
    <svg width="36" height="34" viewBox="0 0 36 34">
      <path d="M10 1h25v22H10z" fill="#1583d6" />
      <path d="M10 1h25v7H10z" fill="#0a5aa8" />
      <path d="M19 8h8v7h-8z" fill="#28a8ea" />
      <path d="M27 8h8v7h-8z" fill="#50d9ff" />
      <path d="M10 17 L35 17 V33 H10Z" fill="#1490df" />
      <path d="M35 17 L14 33 H35Z" fill="#28a8ea" />
      <rect x="0" y="8" width="18" height="18" rx="1.500" fill="#0f6cbd" />
      <circle cx="9" cy="17" r="4" fill="none" stroke="#fff" strokeWidth="2.300" />
    </svg>
  ),
  chrome: <ChromeLogo />,
  github: (
    <svg width="36" height="36" viewBox="0 0 36 36">
      <circle cx="18" cy="18" r="17.500" fill="#7a2ba5" />
      <svg x="5.500" y="5.500" width="25" height="25">
        <FaGithub size={25} color="#efe3f4" />
      </svg>
    </svg>
  ),
  excel: (
    <svg width="36" height="34" viewBox="0 0 36 34">
      <path d="M9 1h13v32H9z" fill="#21a366" />
      <path d="M22 1h13v8H22z" fill="#33c481" />
      <path d="M9 9h13v8H9z" fill="#107c41" />
      <path d="M22 9h13v8H22z" fill="#21a366" />
      <path d="M22 17h13v8H22z" fill="#107c41" />
      <path d="M9 17h13v16H9zM22 25h13v8H22z" fill="#185c37" />
      <rect x="0" y="8" width="18" height="18" rx="1.500" fill="#107c41" />
      <path d="M5.500 12 L12.500 22 M12.500 12 L5.500 22" stroke="#fff" strokeWidth="2.300" />
    </svg>
  ),
  docker: (
    <svg width="36" height="36" viewBox="0 0 36 36">
      <circle cx="18" cy="18" r="18" fill="#1d90ed" />
      <svg x="5" y="4.500" width="27" height="27">
        <FaDocker size={27} color="#fff" />
      </svg>
    </svg>
  ),
  edge: (
    <svg width="36" height="36" viewBox="0 0 36 36">
      <path d="M0 18 A18 18 0 0 1 36 17 Q36 25 28 25 Q22 25 22 21 Q24 18 21 15 Q15 11 8 13 Q2 14 0 18Z" fill="#2fb9d6" />
      <path d="M24 3 A18 18 0 0 1 36 17 Q36 25 28 25 Q22 25 22 21 Q30 16 24 3Z" fill="#5fd864" />
      <path d="M0 18 Q4 9 13 10 Q23 12 23 18 Q17 14 14 20 Q12 26 17 30 L18 36 A18 18 0 0 1 0 18Z" fill="#1175c6" />
      <path d="M14 20 Q16 30 34 27 Q28 36 18 36 Q11 30 14 20Z" fill="#0b4c92" />
      <rect x="0" y="24" width="18" height="12" fill="#c96f10" />
      <path d="M0 24h18v3H0z" fill="#8c4a0a" />
      <path d="M8 29h3v3H8z" fill="#ffc83d" />
    </svg>
  ),
  media: (
    <svg width="36" height="36" viewBox="0 0 36 36">
      <defs>
        <linearGradient id="ring" x1="0" y1="0" x2=".6" y2="1">
          <stop offset="0" stopColor="#ff8f2e" />
          <stop offset=".6" stopColor="#d98080" />
          <stop offset="1" stopColor="#8a5fc4" />
        </linearGradient>
      </defs>
      <circle cx="18" cy="18" r="18" fill="url(#ring)" />
      <circle cx="18" cy="18" r="15.500" fill="#2c2c2c" />
      <path d="M13 10 L26 18 L13 26Z" fill="#f4f4f4" />
    </svg>
  ),
  vscode: (
    <svg width="36" height="36" viewBox="0 0 36 36">
      <path d="M26 0 L36 4.500 V31.500 L26 36Z" fill="#2aa7f2" />
      <path d="M26 0 V9 L4.500 26.500 L0.500 23.500Z" fill="#0b78c4" />
      <path d="M26 36 V27 L4.500 9.500 L0.500 12.500Z" fill="#118bd8" />
    </svg>
  ),
};

const taskbarApps: { id: string; run?: boolean; active?: boolean; count?: [number, number] }[] = [
  { id: "taskview" },
  { id: "teams", count: [30, 3] },
  { id: "folder" },
  { id: "mail" },
  { id: "store" },
  { id: "toggles" },
  { id: "whatsapp", run: true, count: [30, 3] },
  { id: "sync" },
  { id: "outlook" },
  { id: "chrome" },
  { id: "github", run: true },
  { id: "excel", run: true },
  { id: "docker" },
  { id: "edge", run: true },
  { id: "chrome", active: true },
  { id: "media", run: true },
  { id: "vscode", run: true },
];

/* ---------- data ---------- */

const browserTabs = [
  { icon: <CloudGlyph />, label: "Cloud computing, servicios de a", line: true },
  { icon: <PubSubGlyph />, label: "inputdataflowtopic-sub – Pub/S", line: true },
  { icon: <PubSubGlyph />, label: "outputdataflowtopic-sub – Pub/", line: true },
  { icon: <BigQueryGlyph />, label: "BigQuery – My First Project – Co" },
  { icon: <DataflowGlyph w={17} color="#5584e6" />, label: "beamapp-jo...-dpegkp97 – Data", active: true },
];

const navItems = [
  ["overview", "Descripción general"],
  ["monitor", "Supervisión"],
  ["jobs", "Trabajos"],
  ["pipes", "Canalizaciones"],
  ["workbench", "Workbench"],
  ["snapshots", "Instantáneas"],
  ["sql", "Lugar de trabajo de SQL"],
];

const nodes = [
  { x: 567, y: 134, title: "Avg Speed", metric: "En curso", time: "10 s", stages: "1 etapa", more: true },
  { x: 387, y: 338, title: "Encode non_…s to Bytes", metric: "2 elemento/s", time: "0 s", stages: "1 etapa" },
  { x: 747, y: 338, title: "Capture Vehicle image", metric: "1 elemento/s", time: "13 min 52 s", stages: "1 etapa" },
  { x: 387, y: 542, title: "Write non_f… to PubSub", metric: "2 elemento/s", time: "0 s", stages: "1 etapa", more: true },
  { x: 747, y: 542, title: "Model Inference", metric: "1 elemento/s", time: "3 min 7 s", stages: "1 etapa", more: true },
  { x: 747, y: 746, title: "Output Format", metric: "1 elemento/s", time: "0 s", stages: "1 etapa" },
  { x: 747, y: 950, title: "Write fined…o BigQuery", metric: "1 elemento/s", time: "5 min", stages: "2 etapas", more: true, selected: true },
];

const ports: Pt[] = [[667, 260], [767, 260], [537, 464], [897, 464], [897, 668]];

export default function App() {
  return (
    <Screen>
      <Global />
      <TabStrip>
        <TabSearch>
          <ChevronDown w={13} sw={3.2} />
        </TabSearch>
        {browserTabs.map((t) => (
          <BrowserTab key={t.label} $line={t.line}>
            {t.active && (
              <ActiveTabShape width="373" height="51" viewBox="0 0 373 51">
                <path d="M0 51 Q12 50 12 38 V15 Q12 0 27 0 H345 Q360 0 360 15 V38 Q360 50 372 51 Z" fill="#fff" />
              </ActiveTabShape>
            )}
            <TabIcon>{t.active ? <Slot $w={24}>{t.icon}</Slot> : t.icon}</TabIcon>
            <TabLabel $active={t.active}>{t.label}</TabLabel>
            <TabClose>
              <Cross size={12} color={t.active ? "#1f1f1f" : "#3c3c3c"} />
            </TabClose>
          </BrowserTab>
        ))}
        <NewTab>
          <svg width="16" height="16" stroke="#474747" strokeWidth="2.200">
            <path d="M8 0 V16 M0 8 H16" />
          </svg>
        </NewTab>
        <WindowButtons>
          <span>
            <svg width="15" height="15">
              <path d="M0 6.500 H15" stroke="#000" strokeWidth="2" />
            </svg>
          </span>
          <span>
            <svg width="16" height="16" fill="none" stroke="#000" strokeWidth="2">
              <rect x="1" y="4" width="11" height="11" rx="2.500" />
              <path d="M4.500 1.200 H11 Q15 1.200 15 5 V12" />
            </svg>
          </span>
          <span>
            <Cross size={16} w={1.4} color="#000" />
          </span>
        </WindowButtons>
      </TabStrip>

      <ToolbarBack>
        <Toolbar>
          <ToolButton $w={54}>
            <MdArrowBack size={27} />
          </ToolButton>
          <ToolButton $w={54} $dim>
            <MdArrowForward size={27} />
          </ToolButton>
          <ToolButton $w={53}>
            <MdRefresh size={28} />
          </ToolButton>
          <Omnibox>
            <SiteInfo>
              <svg width="20" height="18" viewBox="0 0 20 18" fill="none" stroke="#1f1f1f" strokeWidth="2.400">
                <circle cx="4" cy="4" r="2.800" />
                <path d="M9.500 4 H19 M1 14 H10.500" />
                <circle cx="16" cy="14" r="2.800" />
              </svg>
            </SiteInfo>
            <Url>
              <b>console.cloud.google.com</b>
              /dataflow/jobs/europe-southwest1/2024-02-29_02_02_48-11058935422605276627;step=Write%20fined_vehicles%20to%20BigQuery;graphView=0?project=prime-apricot-415106&amp;pageStat...
            </Url>
            <MdStarOutline size={28} color="#474747" />
          </Omnibox>
          <Slot $w={80}>
            <MdOutlineExtension size={29} />
          </Slot>
          <ToolDivider />
          <Slot $w={78}>
            <svg width="22" height="22" viewBox="0 0 22 22">
              <rect x="1.300" y="1.300" width="19.400" height="19.400" rx="1.500" fill="none" stroke="#474747" strokeWidth="2.600" />
              <path d="M12 1 H21 V21 H12Z" fill="#474747" />
            </svg>
          </Slot>
          <Disc $size={30} $font={16}>J</Disc>
          <Slot $w={76}>
            <svg width="6" height="22" fill="#474747">
              <circle cx="3" cy="3" r="2.200" />
              <circle cx="3" cy="11" r="2.200" />
              <circle cx="3" cy="19" r="2.200" />
            </svg>
          </Slot>
        </Toolbar>
      </ToolbarBack>

      <Header>
        <MdMenu size={36} />
        <Logo>
          <Ink $c="#4285f4">G</Ink>
          <Ink $c="#ea4335">o</Ink>
          <Ink $c="#fbbc04">o</Ink>
          <Ink $c="#4285f4">g</Ink>
          <Ink $c="#34a853">l</Ink>
          <Ink $c="#ea4335">e</Ink> Cloud
        </Logo>
        <ProjectPicker>
          <svg width="22" height="22" viewBox="0 0 22 22" fill="#3c4043">
            <path d="M2.700 0.500h5.200l2.600 4.500-2.600 4.500H2.700L0.100 5zM2.700 12.500h5.200l2.600 4.500-2.600 4.500H2.700L0.100 17zM13.700 6.500h5.200l2.600 4.500-2.600 4.500h-5.200L11.100 11z" />
          </svg>
          <span>My First Project</span>
          <Caret w={18} h={9} />
        </ProjectPicker>
        <SearchBox>
          <SearchInput>Buscar (/) recursos, documentos, productos y más</SearchInput>
          <SearchButton>
            <MdSearch size={36} />
            Buscar
          </SearchButton>
        </SearchBox>
        <HeaderTools>
          <span>
            <CommentSparkle />
          </span>
          <span>
            <ShellGlyph />
          </span>
          <span>
            <Badge5>5</Badge5>
          </span>
          <span>
            <MdHelpOutline size={36} />
          </span>
          <span>
            <MdMoreVert size={36} />
          </span>
          <span>
            <Disc $size={48} $font={25}>J</Disc>
          </span>
        </HeaderTools>
      </Header>

      <Body>
        <Sidebar>
          <Product>
            <DataflowGlyph w={35} color="#5f5f5f" />
            Dataflow
          </Product>
          <NavList>
            {navItems.map(([icon, label]) => (
              <NavItem key={icon} $active={icon === "jobs"}>
                <NavIcon name={icon} />
                {label}
              </NavItem>
            ))}
          </NavList>
          <NotesItem>
            <NotesGlyph />
            Notas de versión
          </NotesItem>
          <Collapse>
            <svg width="18" height="16" fill="none" stroke="#000" strokeWidth="2.400">
              <path d="M9.500 1.500 L3.500 8 L9.500 14.500 M14.500 1 V15" />
            </svg>
          </Collapse>
        </Sidebar>

        <Main>
          <MainHeader>
            <MdArrowBack size={36} />
            <JobTitle>beamapp-josa…</JobTitle>
            <Slot $w={1} />
            <TextButton $gap={11}>
              <StopSquare />
              DETENER
            </TextButton>
            <Slot $w={52} />
            <TextButton $gap={8}>
              <svg width="19" height="22" viewBox="0 0 19 22" fill="none" stroke={blue}>
                <rect x="1.300" y="1.500" width="16.400" height="19" rx="1" strokeWidth="2.700" />
                <path d="M9.500 5.500 v7 M6 9 h7" strokeWidth="2.200" />
                <path d="M5 16.500 h9" strokeWidth="1.800" />
              </svg>
              CREAR INSTANTÁNEA
            </TextButton>
            <Spacer />
            <MdMoreVert size={36} />
            <Slot $w={27} />
            <TextButton>ENVIAR COMENTARIOS</TextButton>
            <Slot $w={42} />
          </MainHeader>
          <TabBar>
            <TabArrow>
              <MdChevronLeft size={33} />
            </TabArrow>
            <PageTab $active>GRAFO DEL TRABAJO</PageTab>
            <PageTab>DETALLES DE LA EJECUCIÓN</PageTab>
            <PageTab>MÉTRICAS DEL TRABAJO</PageTab>
            <PageTab>COSTO</PageTab>
            <PageTab $icon>
              <svg width="16" height="22" viewBox="0 0 16 22" fill="#f9a00a">
                <path d="M8 0 A7.300 7.300 0 0 1 12.500 13 V15.500 H3.500 V13 A7.300 7.300 0 0 1 8 0Z M4 17 H12 V19.500 H10.500 V21.500 H5.500 V19.500 H4Z" />
              </svg>
              RECOMENDACIONES (1)
            </PageTab>
            <Spacer />
            <TabArrow $right>
              <MdChevronRight size={33} />
            </TabArrow>
          </TabBar>

          <Canvas>
            <FilterRow>
              <Outlined $w={299} $font={19.5}>
                <FloatLabel>Vista de los pasos del trabajo</FloatLabel>
                <OutlinedText $w={247}>Vista de gráfico</OutlinedText>
                <Caret />
              </Outlined>
              <RaisedButton>BORRAR SELECCIÓN</RaisedButton>
            </FilterRow>
            <EdgeLayer width="1459" height="1124" fill="none" strokeWidth="6">
              <g stroke="#8c8c8c">
                <path d="M717 123 V134" />
                <path d="M667 260 V268 C666 277 656 281 638 283.500 L575 292 C552 295 537 297 537 310 V338" />
                <path d="M767 260 V268 C768 277 778 281 796 283.500 L860 292 C883 295 897 297 897 310 V338" />
                <path d="M537 464 V542 M897 464 V542 M897 668 V746" />
              </g>
              <path d="M897 872 V950" stroke="#000" />
              {ports.map(([x, y]) => (
                <path key={`${x}-${y}`} d={`M${x - 9} ${y} a9 8.500 0 0 0 18 0Z`} fill="#8c8c8c" />
              ))}
              <path d="M888 872 a9 8.500 0 0 0 18 0Z" fill="#000" />
            </EdgeLayer>
            {nodes.map((n) => (
              <Node key={n.title} $x={n.x} $y={n.y} $selected={n.selected}>
                <NodeStatus>
                  <StatusGlyph />
                </NodeStatus>
                <NodeTitle>{n.title}</NodeTitle>
                <NodeMetric>{n.metric}</NodeMetric>
                <span>{n.time}</span>
                <span>{n.stages}</span>
                {n.more && (
                  <NodeChevron>
                    <ChevronDown />
                  </NodeChevron>
                )}
              </Node>
            ))}
            <GraphScrollbar />
          </Canvas>

          <LogsBar>
            <LogsTitle>Registros</LogsTitle>
            <TextButton $gap={3}>
              <svg width="21" height="18" fill={blue}>
                <path d="M0 0h21v3H0zM3 5h18v3H3zM3 10h18v3H3zM3 15h18v3H3z" />
              </svg>
              MOSTRAR
            </TextButton>
            <Slot $w={49} />
            <TextButton $gap={7}>
              <MdWarning size={24} color="#e37400" />1
            </TextButton>
            <Spacer />
            <svg width="18" height="20" fill="none" stroke={blue} strokeWidth="2.800">
              <path d="M1 10.500 L9 2.500 L17 10.500 M0 18 H18" />
            </svg>
          </LogsBar>
        </Main>

        <Panel>
          <PanelHeader>
            Información del paso
            <svg width="19" height="20" fill="none" stroke={blue} strokeWidth="2.800">
              <path d="M1.500 1.500 L9.500 10 L1.500 18.500 M17 1 V19" />
            </svg>
          </PanelHeader>
          <PanelBody>
            <PanelContent>
              <InfoTable>
                <InfoRow>
                  <dt>Nombre del paso</dt>
                  <dd>Write fined_vehicles to BigQuery</dd>
                </InfoRow>
                <InfoRow>
                  <dt>
                    Retraso del sistema
                    <MdHelp size={25} />
                  </dt>
                  <dd>6 s</dd>
                </InfoRow>
                <InfoRow>
                  <dt>
                    {"Marca de agua de los\ndatos"}
                    <MdHelp size={25} />
                  </dt>
                  <dd>{"29 de febrero de 2024, 11:16:13\u202fa.m.\nUTC+1"}</dd>
                </InfoRow>
                <InfoRow>
                  <dt>
                    Tiempo
                    <MdHelp size={25} />
                  </dt>
                  <dd>5 min</dd>
                </InfoRow>
              </InfoTable>

              <Heading>Colecciones de entrada</Heading>
              <Card $h={285}>
                <CardTop $pad={27} $h={81}>
                  <Outlined $w={474} $font={22.5}>
                    <FloatLabel>Gráfico</FloatLabel>
                    <OutlinedText $w={371}>Capacidad de procesamiento (ele…</OutlinedText>
                    <Caret />
                    <Slot $w={84}>
                      <MdHelp size={25} color="#000" />
                    </Slot>
                  </Outlined>
                  <CardMenu $raise>
                    <MdMoreVert size={36} />
                  </CardMenu>
                </CardTop>
                <Chart h={153} top={15} max="5/s">
                  <polyline points={line(throughput)} fill="none" stroke="#1967d2" strokeWidth="2" />
                  <circle cx="420.400" cy="105.700" r="6" fill="#1967d2" />
                </Chart>
                <Legend>
                  <svg width="35" height="14">
                    <path d="M1 6 H26" stroke="#1967d2" strokeWidth="3" />
                    <circle cx="28" cy="6" r="6" fill="#1967d2" />
                  </svg>
                  <span>Output Format.out0:</span>
                  <span>0.7/s</span>
                </Legend>
              </Card>
              <Caption>Output Format.out0</Caption>
              <InfoTable>
                <InfoRow>
                  <dt>{"Elementos agregados\n(aproximado)"}</dt>
                  <dd>616</dd>
                </InfoRow>
                <InfoRow>
                  <dt>Tamaño estimado</dt>
                  <dd>149.19 KB</dd>
                </InfoRow>
              </InfoTable>

              <Heading>Actualidad de los datos de salida</Heading>
              <Card $h={252}>
                <CardTop $pad={21} $h={73}>
                  <CardTitle>
                    Actualidad de los datos por etapas
                    <MdHelp size={25} />
                  </CardTitle>
                  <CardMenu>
                    <MdMoreVert size={36} />
                  </CardMenu>
                </CardTop>
                <Chart h={173} top={26.5} max="10min">
                  <polyline points="386,124 420.400,125" fill="none" stroke="#1967d2" strokeWidth="2" />
                  <circle cx="420.400" cy="126" r="5.500" fill="#1967d2" />
                  <polyline points={line(freshness)} fill="none" stroke="#129eaf" strokeWidth="2" />
                  <rect x="414" y="122" width="13" height="13" fill="#fff" />
                  <rect x="415" y="123" width="11" height="11" fill="#129eaf" />
                </Chart>
              </Card>

              <Heading $top={44}>Etapas optimizadas</Heading>
              <StageGrid $head>
                <span>Nombre de la etapa</span>
                <span>
                  Progreso
                  <MdArrowUpward size={29} />
                </span>
              </StageGrid>
              <StageGrid>
                <span>F10</span>
                <span>
                  <StatusGlyph />
                  En curso
                </span>
              </StageGrid>
            </PanelContent>
            <PanelScrollbar />
          </PanelBody>
          <ResizeHandle />
        </Panel>
      </Body>

      <Taskbar>
        <Weather>
          <SunIcon>
            <Count $x={15} $y={-11} $c="#c42b1c">1</Count>
          </SunIcon>
          <span>
            14°C
            <br />
            <em>Soleado</em>
          </span>
        </Weather>
        <svg width="35" height="35" viewBox="0 0 35 35">
          <defs>
            <linearGradient id="win" x1="0" y1="0" x2="1" y2="1">
              <stop offset="0" stopColor="#46cdf8" />
              <stop offset="1" stopColor="#0070cf" />
            </linearGradient>
          </defs>
          <path d="M0 1 q0-1 1-1h16v17H0zM18 0h16q1 0 1 1v16H18zM0 18h17v17H1q-1 0-1-1zM18 18h17v16q0 1-1 1H18z" fill="url(#win)" />
        </svg>
        <SearchPill>
          <svg width="24" height="24" viewBox="0 0 24 24" fill="none" stroke="#1f1f1f" strokeWidth="2.600">
            <circle cx="11" cy="10" r="8.500" />
            <path d="M16.500 16.500 L22.500 22.500" strokeWidth="3.200" />
          </svg>
          <span>Búsqueda</span>
          <Castle />
        </SearchPill>
        <Apps>
          {taskbarApps.map((a, i) => (
            <AppCell key={i} $run={a.run} $active={a.active}>
              {appIcons[a.id]}
              {a.count && (
                <Count $x={a.count[0]} $y={a.count[1]}>
                  1
                </Count>
              )}
              {a.active && <Profile>J</Profile>}
            </AppCell>
          ))}
        </Apps>
        <Tray>
          <svg width="17" height="11" fill="none" stroke="#1b1b1b" strokeWidth="2">
            <path d="M1 10 L8.500 2 L16 10" />
          </svg>
          <Slot $w={78}>
            <svg width="26" height="19" viewBox="0 0 26 19" stroke="#1b1b1b" strokeWidth="1.500">
              <path d="M6 17.500 A5 5 0 0 1 5 8 A7.500 7.500 0 0 1 19 6.500 A5.500 5.500 0 0 1 20.500 17.500Z" fill="#8d8d8d" />
              <path d="M4 17 L14 10 L20 7 A5.500 5.500 0 0 1 20.500 17.500 H6Z" fill="#e6e6e6" stroke="none" />
              <path d="M6 17.500 A5 5 0 0 1 5 8 A7.500 7.500 0 0 1 19 6.500 A5.500 5.500 0 0 1 20.500 17.500Z" fill="none" />
            </svg>
          </Slot>
          <svg width="24" height="18" viewBox="0 0 24 18" fill="none" stroke="#1b1b1b" strokeWidth="1.600">
            <path d="M1 6.500 A15.500 15.500 0 0 1 23 6.500 M4.500 9.800 A10.600 10.600 0 0 1 19.500 9.800 M8 13 A5.700 5.700 0 0 1 16 13" />
            <circle cx="12" cy="15.500" r="1.800" fill="#1b1b1b" stroke="none" />
          </svg>
          <Slot $w={46}>
            <svg width="24" height="20" viewBox="0 0 24 20" fill="none" stroke="#1b1b1b" strokeWidth="1.600">
              <path d="M1 7 H5 L10 2 V18 L5 13 H1Z" strokeLinejoin="round" />
              <path d="M13 7 A5 5 0 0 1 13 13 M16 4.500 A8 8 0 0 1 16 15.500" />
              <path d="M19 2 A12 12 0 0 1 19 18" stroke="#aaa" />
            </svg>
          </Slot>
          <svg width="24" height="16" viewBox="0 0 24 16" fill="none" stroke="#1b1b1b" strokeWidth="1.800">
            <rect x="1" y="1" width="19" height="14" rx="3" />
            <path d="M22.500 5.500 V10.500" strokeWidth="2.500" />
            <path d="M4.500 4.500 V11.500" strokeWidth="3" />
          </svg>
          <Slot $w={9} />
          <Clock>
            11:17
            <br />
            29/02/2024
          </Clock>
          <Slot $w={48}>
            <svg width="20" height="24" viewBox="0 0 20 24" fill="#8f0a2c">
              <path d="M10 0 A7.500 7.500 0 0 1 17.500 7.500 V13 L20 18.500 H0 L2.500 13 V7.500 A7.500 7.500 0 0 1 10 0Z M6.500 20 H13.500 A3.500 3 0 0 1 6.500 20Z" />
            </svg>
          </Slot>
        </Tray>
      </Taskbar>
    </Screen>
  );
}
